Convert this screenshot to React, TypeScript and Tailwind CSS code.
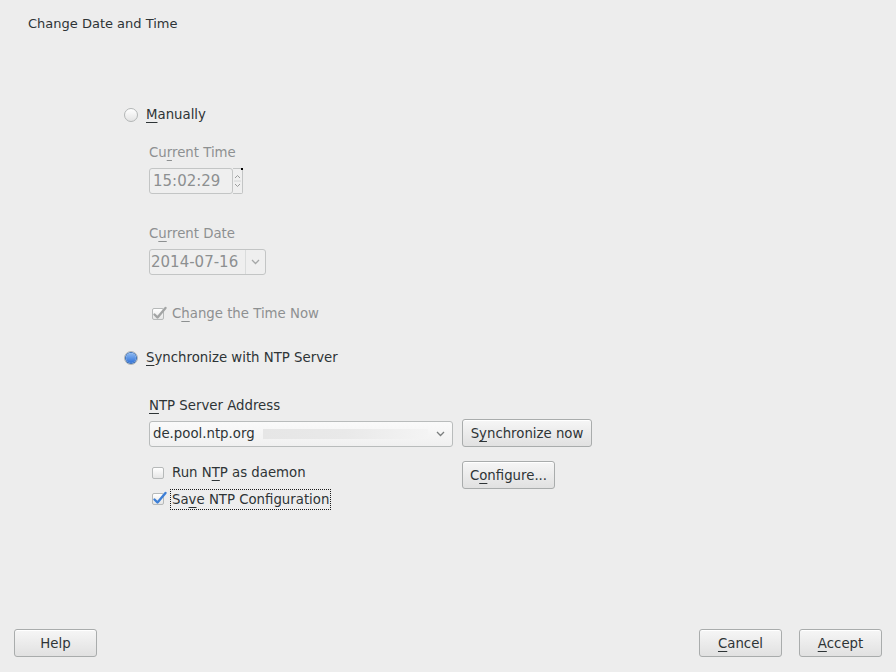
import type {FC, ReactNode} from "react";

const Radio: FC<{checked?: boolean}> = ({checked}) => (
    <span className="relative flex h-[14px] w-[14px] shrink-0 items-center justify-center rounded-full border border-[#b3b6b6] bg-gradient-to-b from-[#ffffff] to-[#e4e4e4]">
        {checked && <span className="h-[10px] w-[10px] rounded-full bg-gradient-to-b from-[#8cb8f0] to-[#2f72d8] shadow-[0_0_0_1px_#3a6fb8]"/>}
    </span>
);

const Check: FC<{checked?: boolean; disabled?: boolean}> = ({checked, disabled}) => (
    <span className="relative block h-[12px] w-[12px] shrink-0 rounded-[2px] border border-[#b6b9b9] bg-gradient-to-b from-[#ffffff] to-[#e6e6e6]">
        {checked && <svg className="absolute -left-[1px] -top-[4px]" width="16" height="16" viewBox="0 0 16 16">
            <path d="M2.5 9.5 L5.5 12.5 L13.5 3" fill="none" stroke={disabled ? "#a3a5a5" : "#3d7fd6"} strokeWidth="2.4" strokeLinecap="round" strokeLinejoin="round"/>
        </svg>}
    </span>
);

const Button: FC<{children: ReactNode; className?: string}> = ({children, className}) => (
    <div className={`flex h-[28px] items-center justify-center rounded-[3px] border border-[#a9acac] bg-gradient-to-b from-[#f6f6f6] to-[#e1e1e1] pt-[2px] text-[#2e3436] shadow-[inset_0_1px_0_#ffffff] ${className ?? ""}`}>
        {children}
    </div>
);

const U: FC<{children: ReactNode}> = ({children}) => <span className="underline decoration-1 underline-offset-[3px]">{children}</span>;

const Arrow: FC<{color?: string}> = ({color = "#7b7e7e"}) => (
    <svg width="9" height="6" viewBox="0 0 9 6"><path d="M1 1 L4.5 4.5 L8 1" fill="none" stroke={color} strokeWidth="1.3"/></svg>
);

export default function App() {
    const dim = "text-[#8d9091]";
    return <div className="flex h-[672px] w-[896px] flex-col bg-[#ededed] font-['DejaVu_Sans',sans-serif] text-[13.3px] leading-[18px] text-[#2e3436]">
        <div className="pl-[28px] pt-[15px] text-[13px]">Change Date and Time</div>

        <div className="ml-[124px] mt-[72px] flex flex-col">
            <div className="flex h-[20px] items-center gap-[8px]">
                <Radio/>
                <span><U>M</U>anually</span>
            </div>
            <div className="ml-[25px] mt-[19px] flex flex-col">
                <div className={`h-[18px] ${dim}`}>Cu<U>r</U>rent Time</div>
                <div className="mt-[6px] flex h-[26px]">
                    <div className={`flex w-[84px] items-center rounded-[3px] border border-[#c3c5c5] bg-[#efefef] pl-[3px] text-[15px] ${dim}`}>15:02:29</div>
                    <div className="relative flex w-[10px] flex-col items-center justify-center rounded-r-[2px] border border-l-0 border-[#c3c5c5] bg-[#efefef]">
                        <span className="absolute -right-[1px] -top-[1px] h-[2px] w-[2px] bg-black"/>
                        <svg width="7" height="20" viewBox="0 0 7 20">
                            <path d="M1 7 L3.5 4.5 L6 7" fill="none" stroke="#9a9c9c" strokeWidth="1"/>
                            <line x1="0" y1="10" x2="7" y2="10" stroke="#d4d6d6"/>
                            <path d="M1 13 L3.5 15.5 L6 13" fill="none" stroke="#9a9c9c" strokeWidth="1"/>
                        </svg>
                    </div>
                </div>

                <div className={`mt-[31px] h-[18px] ${dim}`}>C<U>u</U>rrent Date</div>
                <div className="mt-[6px] flex h-[26px] w-[117px] items-center rounded-[3px] border border-[#c3c5c5] bg-[#efefef]">
                    <span className={`flex-1 pl-[1px] text-[15px] ${dim}`}>2014-07-16</span>
                    <span className="flex h-full w-[20px] items-center justify-center border-l border-[#dadcdc]"><Arrow color="#a5a7a7"/></span>
                </div>

                <div className="mt-[30px] flex h-[18px] items-center gap-[8px] pl-[3px]">
                    <Check checked disabled/>
                    <span className={dim}>C<U>h</U>ange the Time Now</span>
                </div>
            </div>

            <div className="mt-[25px] flex h-[20px] items-center gap-[8px]">
                <Radio checked/>
                <span><U>S</U>ynchronize with NTP Server</span>
            </div>

            <div className="ml-[25px] mt-[29px] flex flex-col">
                <div className="h-[18px]"><U>N</U>TP Server Address</div>
                <div className="mt-[4px] grid grid-cols-[304px_auto] gap-x-[9px]">
                    <div className="mt-[2px] flex h-[26px] items-center rounded-[3px] border border-[#b9bcbc] bg-gradient-to-b from-[#fafafa] to-[#f0f0f0] pl-[3px] pr-[7px]">
                        <span className="shrink-0">de.pool.ntp.org</span>
                        <span className="ml-[8px] mr-[8px] h-[10px] flex-1 bg-gradient-to-r from-[#e6e6e6] via-[#e9e9e9] to-[#f4f4f4]"/>
                        <Arrow/>
                    </div>
                    <Button className="w-[130px]">S<U>y</U>nchronize now</Button>

                    <div className="mt-[13px] flex flex-col pl-[3px]">
                        <div className="flex h-[26px] items-center gap-[8px]">
                            <Check/>
                            <span>Run N<U>T</U>P as daemon</span>
                        </div>
                        <div className="flex h-[26px] items-center gap-[6px]">
                            <Check checked/>
                            <span className="border border-dotted border-[#1a1a1a] px-[1px] leading-[19px]">Sa<U>v</U>e NTP Configuration</span>
                        </div>
                    </div>
                    <Button className="mt-[14px] w-[93px]">C<U>o</U>nfigure...</Button>
                </div>
            </div>
        </div>

        <div className="flex-1"/>
        <div className="flex items-center px-[14px] pb-[15px]">
            <Button className="w-[83px]">Help</Button>
            <div className="flex-1"/>
            <Button className="w-[83px]"><U>C</U>ancel</Button>
            <Button className="ml-[17px] w-[83px]"><U>A</U>ccept</Button>
        </div>
    </div>;
}
